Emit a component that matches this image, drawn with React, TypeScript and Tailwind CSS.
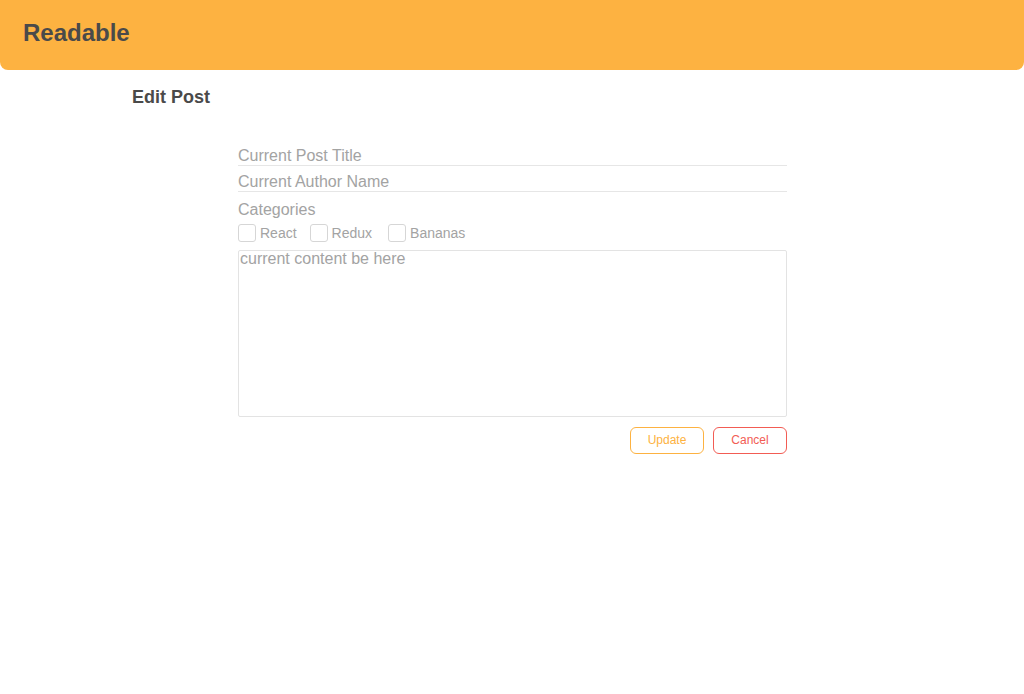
import { useState } from 'react';

const categories = [
  { name: 'React', gap: 'mr-[13px]' },
  { name: 'Redux', gap: 'mr-[16px]' },
  { name: 'Bananas', gap: '' },
];

export default function App() {
  const [title, setTitle] = useState('');
  const [author, setAuthor] = useState('');
  const [body, setBody] = useState('');
  const [checked, setChecked] = useState<{ [key: string]: boolean }>({});

  return (
    <div className="min-h-[694px] bg-white font-['Liberation_Sans',Arial,sans-serif]">
      <header className="h-[70px] bg-[#fdb241] rounded-b-lg flex items-center px-[23px]">
        <h1 className="text-[24px] font-bold text-[#4a4a4a] leading-none -mt-[5px]">Readable</h1>
      </header>

      <main className="pl-[132px] pt-[16px]">
        <h2 className="text-[18px] font-bold text-[#4a4a4a] leading-[22px]">Edit Post</h2>

        <form className="ml-[106px] w-[549px] mt-[37px] flex flex-col" onSubmit={(e) => e.preventDefault()}>
          <input
            value={title}
            onChange={(e) => setTitle(e.target.value)}
            placeholder="Current Post Title"
            className="h-[21px] pt-[2px] border-b border-[#e6e6e6] text-[16px] text-[#999] placeholder:text-[#a3a3a3] outline-none"
          />
          <input
            value={author}
            onChange={(e) => setAuthor(e.target.value)}
            placeholder="Current Author Name"
            className="mt-[5px] h-[21px] pt-[2px] border-b border-[#e6e6e6] text-[16px] text-[#999] placeholder:text-[#a3a3a3] outline-none"
          />

          <label className="mt-[9px] text-[16px] leading-[18px] text-[#a3a3a3]">Categories</label>

          <div className="mt-[5px] flex items-center h-[18px]">
            {categories.map((c) => (
              <label key={c.name} className={`flex items-center cursor-pointer ${c.gap}`}>
                <input
                  type="checkbox"
                  checked={!!checked[c.name]}
                  onChange={(e) => setChecked((prev) => ({ ...prev, [c.name]: e.target.checked }))}
                  className="appearance-none w-[18px] h-[18px] border border-[#d6d6d6] rounded-[3px] checked:bg-[#fdb241] checked:border-[#fdb241]"
                />
                <span className="ml-[4px] text-[14px] text-[#a3a3a3]">{c.name}</span>
              </label>
            ))}
          </div>

          <textarea
            value={body}
            onChange={(e) => setBody(e.target.value)}
            placeholder="current content be here"
            className="mt-[8px] h-[167px] border border-[#e3e3e3] rounded-[2px] px-[1px] pt-0 pb-0 text-[16px] leading-[16px] text-[#999] placeholder:text-[#a3a3a3] outline-none resize-none"
          />

          <div className="mt-[10px] flex justify-end gap-[9px]">
            <button
              type="submit"
              className="w-[74px] h-[27px] pb-[1px] border border-[#fdb241] rounded-[6px] text-[12px] text-[#fdb241] bg-white"
            >
              Update
            </button>
            <button
              type="button"
              className="w-[74px] h-[27px] pb-[1px] border border-[#f25c54] rounded-[6px] text-[12px] text-[#f25c54] bg-white"
            >
              Cancel
            </button>
          </div>
        </form>
      </main>
    </div>
  );
}
